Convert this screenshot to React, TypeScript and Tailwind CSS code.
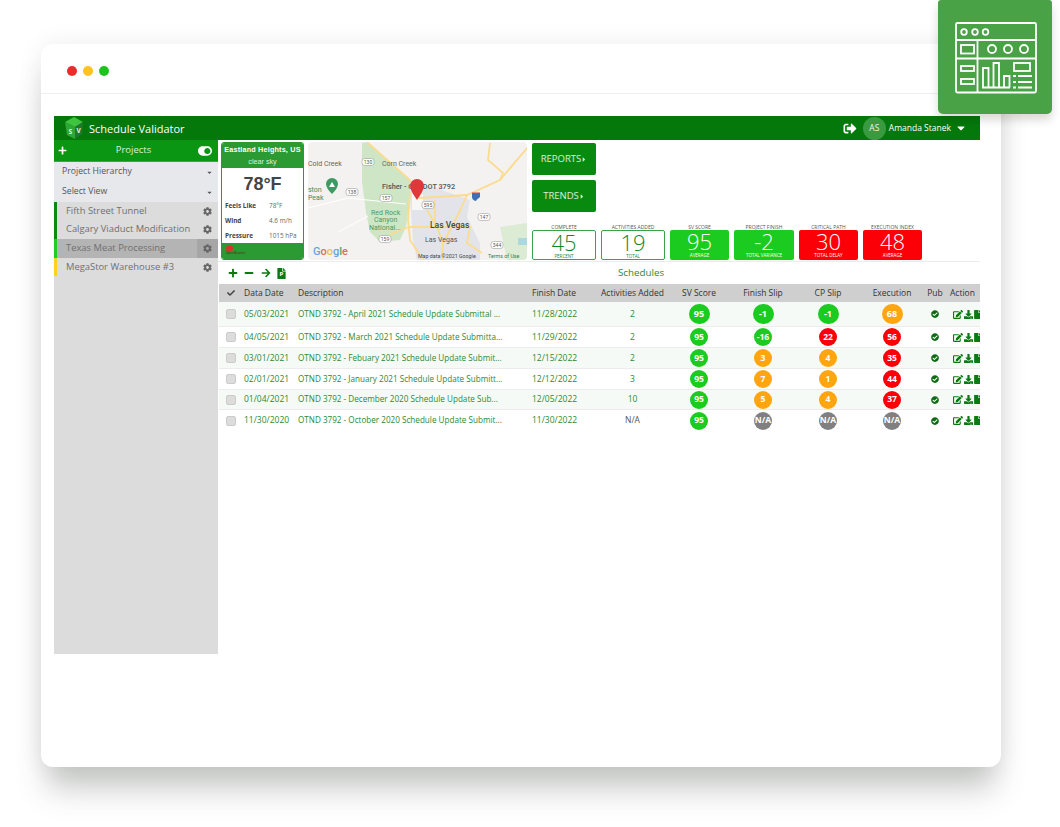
import React from "react";
import {
  FaCog, FaCheckCircle, FaEdit, FaDownload, FaSignOutAlt, FaCheck, FaPlus, FaMinus,
  FaArrowRight, FaCaretDown, FaCaretRight, FaToggleOn, FaFile,
} from "react-icons/fa";

type Tone = "g" | "r" | "o" | "n";
const toneClass: Record<Tone, string> = {
  g: "bg-[#1ccb1f]",
  r: "bg-[#fb0007]",
  o: "bg-[#ffa50f]",
  n: "bg-[#808080]",
};

function Badge({ v, t, big }: { v: string; t: Tone; big?: boolean }) {
  return (
    <span
      className={`inline-flex items-center justify-center rounded-full font-bold text-white ${toneClass[t]} ${
        big ? "w-[21px] h-[20px] text-[9px]" : "w-[18px] h-[18px] text-[8.5px]"
      }`}
    >
      {v}
    </span>
  );
}

const rows: {
  h: string; date: string; desc: string; fin: string; act: string;
  sv: [string, Tone]; fs: [string, Tone]; cp: [string, Tone]; ex: [string, Tone]; bg: string; big?: boolean;
}[] = [
  { h: "h-[25px]", date: "05/03/2021", desc: "OTND 3792 - April 2021 Schedule Update Submittal ...", fin: "11/28/2022", act: "2", sv: ["95", "g"], fs: ["-1", "g"], cp: ["-1", "g"], ex: ["68", "o"], bg: "bg-[#f6faf6]", big: true },
  { h: "h-[21px]", date: "04/05/2021", desc: "OTND 3792 - March 2021 Schedule Update Submitta...", fin: "11/29/2022", act: "2", sv: ["95", "g"], fs: ["-16", "g"], cp: ["22", "r"], ex: ["56", "r"], bg: "bg-white" },
  { h: "h-[21px]", date: "03/01/2021", desc: "OTND 3792 - Febuary 2021 Schedule Update Submit...", fin: "12/15/2022", act: "2", sv: ["95", "g"], fs: ["3", "o"], cp: ["4", "o"], ex: ["35", "r"], bg: "bg-[#f6faf6]" },
  { h: "h-[21px]", date: "02/01/2021", desc: "OTND 3792 - January 2021 Schedule Update Submitt...", fin: "12/12/2022", act: "3", sv: ["95", "g"], fs: ["7", "o"], cp: ["1", "o"], ex: ["44", "r"], bg: "bg-white" },
  { h: "h-[20px]", date: "01/04/2021", desc: "OTND 3792 - December 2020 Schedule Update Sub...", fin: "12/05/2022", act: "10", sv: ["95", "g"], fs: ["5", "o"], cp: ["4", "o"], ex: ["37", "r"], bg: "bg-[#f6faf6]" },
  { h: "h-[21px]", date: "11/30/2020", desc: "OTND 3792 - October 2020 Schedule Update Submit...", fin: "11/30/2022", act: "N/A", sv: ["95", "g"], fs: ["N/A", "n"], cp: ["N/A", "n"], ex: ["N/A", "n"], bg: "bg-white" },
];

const gridCols = "grid grid-cols-[25px_54px_234px_69px_63px_70px_58px_72px_56px_30px_1fr] items-center";

const kpis: { label: string; value: string; sub: string; box: string; w: string }[] = [
  { label: "COMPLETE", value: "45", sub: "PERCENT", box: "bg-white border border-[#3aa34a] text-[#12862a]", w: "w-[64px]" },
  { label: "ACTIVITIES ADDED", value: "19", sub: "TOTAL", box: "bg-white border border-[#3aa34a] text-[#12862a]", w: "w-[64px]" },
  { label: "SV SCORE", value: "95", sub: "AVERAGE", box: "bg-[#1ccb1f] text-white", w: "w-[59px]" },
  { label: "PROJECT FINISH", value: "-2", sub: "TOTAL VARIANCE", box: "bg-[#1ccb1f] text-white", w: "w-[60px]" },
  { label: "CRITICAL PATH", value: "30", sub: "TOTAL DELAY", box: "bg-[#fb0007] text-white", w: "w-[59px]" },
  { label: "EXECUTION INDEX", value: "48", sub: "AVERAGE", box: "bg-[#fb0007] text-white", w: "w-[59px]" },
];

const projects = [
  { name: "Fifth Street Tunnel", stripe: "bg-[#0a8a12]", bg: "bg-[#dcdcdc]", h: "h-[18px]", gearBg: "" },
  { name: "Calgary Viaduct Modification", stripe: "bg-[#0a8a12]", bg: "bg-[#dcdcdc]", h: "h-[19px]", gearBg: "" },
  { name: "Texas Meat Processing", stripe: "bg-[#22cc22]", bg: "bg-[#b4b4b4]", h: "h-[19px]", gearBg: "bg-[#a6a6a6]" },
  { name: "MegaStor Warehouse #3", stripe: "bg-[#ffd21f]", bg: "bg-[#dcdcdc]", h: "h-[18px]", gearBg: "" },
];

function Logo() {
  return (
    <svg width="20" height="22" viewBox="0 0 20 22" className="shrink-0">
      <polygon points="1,5 10,0 19,5 11,10" fill="#3fc43f" />
      <polygon points="1,5 11,10 11,22 3,18" fill="#2ea836" />
      <polygon points="11,10 19,5 18,17 11,22" fill="#1e7a2a" />
      <text x="4.500" y="17" fontSize="6.500" fontWeight="700" fill="#e4f7e4" fontFamily="Open Sans">S</text>
      <text x="12.500" y="16" fontSize="6.500" fontWeight="700" fill="#e4f7e4" fontFamily="Open Sans">V</text>
    </svg>
  );
}

function BadgeIcon() {
  return (
    <svg width="114" height="114" viewBox="938 0 114 114" fill="none" stroke="#fff" strokeWidth="1.8">
      <rect x="956" y="23" width="80" height="69.5" rx="1.500" />
      <path d="M956 40H1036M956 58.500H1036M977.500 40V92.500" />
      <circle cx="964" cy="32" r="2.800" />
      <circle cx="975" cy="32" r="2.800" />
      <circle cx="985.500" cy="32" r="2.800" />
      <rect x="961" y="45" width="13" height="8.500" />
      <circle cx="992" cy="49" r="4" />
      <circle cx="1008" cy="49" r="4" />
      <circle cx="1024" cy="49" r="4" />
      <rect x="961" y="66" width="13" height="5" />
      <rect x="961" y="79" width="13" height="5" />
      <path d="M982 87.500H1010M983 87.500V68H988.500V87.500M993.500 87.500V63H999V87.500M1004 87.500V76H1009.500V87.500" />
      <rect x="1014" y="63" width="16" height="8" />
      <path d="M1013 76H1016M1018 76H1032M1013 82H1016M1018 82H1032M1013 87.500H1016M1018 87.500H1032" />
    </svg>
  );
}

function MapArt() {
  const label = { fontFamily: "Roboto, sans-serif" };
  const shields: [number, number, string][] = [[60, 20, "130"], [44, 50, "138"], [78, 56, "157"], [120, 63, "595"], [176, 75, "147"], [77, 97, "159"], [189, 103, "344"]];
  return (
    <svg width="219" height="118" viewBox="0 0 219 118" className="rounded-sm block">
      <rect width="219" height="118" fill="#f3f2f0" />
      <polygon points="54,1 60,0 102,38 102,55 98,85 92,98 72,100 62,90 58,70 54,40" fill="#cfe6c6" />
      <polygon points="192,85 219,81 219,118 199,118" fill="#dcebd4" />
      <polygon points="102,41 125,45 162,58 159,75 172,101 172,118 109,118 105,98 102,55" fill="#e2e4ea" />
      <polygon points="104,52 115,52 115,68 104,68" fill="#f6f6f6" />
      <rect x="210" y="96" width="9" height="7" fill="#aadae0" />
      <g fill="none" stroke="#fbdc8e" strokeWidth="1.800">
        <path d="M60 1 L102 38 L107 51 L112 56 L159 53 L192 38 L219 6" />
        <path d="M182 1 L180 18 L195 31 L192 38" />
        <path d="M159 53 L149 75 L135 101 L134 118" />
        <path d="M102 50 L100 78 L102 98 L115 118" />
        <path d="M102 85 H162 L159 101 L174 111" />
        <path d="M72 98 L92 88 L102 85" />
        <path d="M119 68 L129 85 L135 101" />
        <path d="M127 58 V85" />
      </g>
      <path d="M0 66 L40 56 L98 62 M30 90 L60 74" stroke="#fff" strokeWidth="1" fill="none" />
      {shields.map(([x, y, t]) => (
        <g key={t}>
          <rect x={x - 6} y={y - 3.5} width="12" height="7" rx="2.500" fill="#fff" stroke="#8a8a8a" strokeWidth="0.500" />
          <text x={x} y={y + 1.8} fontSize="5" textAnchor="middle" fill="#555" style={label}>{t}</text>
        </g>
      ))}
      <path d="M164 51 h8 v4 q-4 3-4 4 q-4 -1 -4 -4z" fill="#3f6fb5" />
      <rect x="164" y="50.500" width="8" height="1.500" fill="#d9423b" />
      <text x="0" y="24" fontSize="7" fill="#666" style={label}>Cold Creek</text>
      <text x="74" y="24" fontSize="7" fill="#666" style={label}>Corn Creek</text>
      <text x="0" y="50" fontSize="7" fill="#3d8f5a" style={label}>ston</text>
      <text x="0" y="58" fontSize="7" fill="#3d8f5a" style={label}>Peak</text>
      <path d="M18 42 a6 6 0 1 1 12 0 q0 4 -6 10 q-6 -6 -6 -10z" fill="#3d9a63" />
      <path d="M21 45 L24 40 L27 45z" fill="#fff" />
      <text x="74" y="47" fontSize="7.300" fontWeight="500" fill="#555" style={label}>Fisher - OTNDOT 3792</text>
      <text x="63" y="73" fontSize="7" fill="#4c9a62" style={label}>Red Rock</text>
      <text x="66" y="80" fontSize="7" fill="#4c9a62" style={label}>Canyon</text>
      <text x="61" y="88" fontSize="7" fill="#4c9a62" style={label}>National...</text>
      <text x="122" y="86" fontSize="8.500" fontWeight="500" fill="#444" style={label}>Las Vegas</text>
      <text x="117" y="100" fontSize="7" fill="#555" style={label}>Las Vegas</text>
      <path d="M102 44 a7 7 0 1 1 14 0 q0 4 -7 14 q-7 -10 -7 -14z" fill="#e0373a" />
      <text x="5" y="113" fontSize="11" fontWeight="500" style={label}>
        <tspan fill="#6a9fe0">G</tspan><tspan fill="#e36a5c">o</tspan><tspan fill="#f0c040">o</tspan><tspan fill="#6a9fe0">g</tspan><tspan fill="#4aa86a">l</tspan><tspan fill="#e36a5c">e</tspan>
      </text>
      <text x="110" y="115.500" fontSize="5.300" fill="#444" style={label}>Map data ©2021 Google</text>
      <text x="180" y="115.500" fontSize="5.300" fill="#2f7d52" style={label}>Terms of Use</text>
    </svg>
  );
}

function ProjectFile({ className }: { className?: string }) {
  return (
    <span className={`relative inline-flex ${className ?? ""}`}>
      <FaFile className="text-[#0b7a12] w-[9px] h-[11px]" />
      <span className="absolute inset-0 flex items-center justify-center text-[6px] font-bold text-white pt-[2px]">P</span>
    </span>
  );
}

export default function App() {
  return (
    <div className="relative w-[1060px] h-[827px] overflow-hidden bg-white font-['Open_Sans',sans-serif]">
      <div className="absolute left-[938px] top-0 w-[114px] h-[114px] bg-[#4aa247] rounded-b-[5px] rounded-t-[3px] shadow-[0_6px_10px_rgba(0,0,0,0.15)] z-10">
        <BadgeIcon />
      </div>

      <div className="pt-[44px] pl-[41px]">
        <div className="w-[960px] h-[723px] bg-white rounded-[12px] shadow-[0_28px_30px_-6px_rgba(60,70,60,0.28),0_0_26px_rgba(0,0,0,0.07)]">
          <div className="h-[50px] border-b border-[#eeeeee] flex items-center gap-[6px] pl-[26px] pt-[5px]">
            <span className="w-[10px] h-[10px] rounded-full bg-[#ee2b2b]" />
            <span className="w-[10px] h-[10px] rounded-full bg-[#ffc21f]" />
            <span className="w-[10px] h-[10px] rounded-full bg-[#1cc41c]" />
          </div>

          <div className="mt-[22px] ml-[13px] w-[926px] h-[538px] flex flex-col overflow-hidden">
            <div className="h-[24px] bg-[#05780b] flex items-center text-white shrink-0">
              <div className="ml-[10px] flex"><Logo /></div>
              <span className="ml-[5px] text-[11px] leading-none">Schedule Validator</span>
              <FaSignOutAlt className="ml-auto w-[14px] h-[13px]" />
              <span className="ml-[6px] w-[23px] h-[23px] rounded-full bg-[#3a9a3f] flex items-center justify-center text-[8.5px] text-white/90">AS</span>
              <span className="ml-[3px] text-[8.5px]">Amanda Stanek</span>
              <FaCaretDown className="ml-[4px] mr-[13px] w-[12px] h-[12px]" />
            </div>

            <div className="flex flex-1 min-h-0">
              <aside className="w-[164px] shrink-0 bg-[#dcdcdc] flex flex-col">
                <div className="h-[22px] bg-[#0a9612] border-b border-[#2bb32f] flex items-center text-white relative">
                  <FaPlus className="ml-[4px] w-[9px] h-[9px]" />
                  <span className="flex-1 text-center text-[9.5px] text-[#d9f2da] pl-[2px]">Projects</span>
                  <FaToggleOn className="mr-[6px] w-[14px] h-[14px]" />
                </div>
                <div className="h-[20px] bg-[#e7e8ec] flex items-center pl-[8px] pr-[5px] text-[8.7px] text-[#555]">
                  <span className="flex-1">Project Hierarchy</span>
                  <FaCaretDown className="w-[7px] h-[7px] text-[#555]" />
                </div>
                <div className="h-[20px] bg-[#e7e8ec] flex items-center pl-[8px] pr-[5px] text-[8.7px] text-[#555]">
                  <span className="flex-1">Select View</span>
                  <FaCaretDown className="w-[7px] h-[7px] text-[#555]" />
                </div>
                {projects.map((p) => (
                  <div key={p.name} className={`flex items-stretch ${p.h} ${p.bg}`}>
                    <span className={`w-[3px] shrink-0 ${p.stripe}`} />
                    <span className="flex-1 pl-[9px] flex items-center text-[9.4px] text-[#707070] whitespace-nowrap">{p.name}</span>
                    <span className={`w-[21px] flex items-center justify-center ${p.gearBg}`}>
                      <FaCog className="w-[9px] h-[9px] text-[#666]" />
                    </span>
                  </div>
                ))}
              </aside>

              <main className="flex-1 min-w-0 flex flex-col">
                <div className="h-[122px] border-b border-[#ececec] flex shrink-0 pl-[3px] pt-[2px]">
                  <div className="w-[83px] h-[118px] rounded-[3px] border border-[#2b9a33] flex flex-col overflow-hidden shrink-0">
                    <div className="h-[25px] bg-[#2b9a33] text-white text-center font-bold text-[7.2px] leading-[9px] pt-[2px] font-['Liberation_Sans',sans-serif] whitespace-nowrap">
                      <div className="tracking-[0.2px]">Eastland Heights, US</div>
                      <div className="font-normal mt-[3px] text-[#d9f2da]">clear sky</div>
                    </div>
                    <div className="flex-1 px-[3px]">
                      <div className="text-center text-[18px] font-bold text-[#444] leading-[18px] mt-[7px] font-['Liberation_Sans',sans-serif]">78°F</div>
                      {[["Feels Like", "78°F"], ["Wind", "4.6 m/h"], ["Pressure", "1015 hPa"]].map(([k, v], i) => (
                        <div key={k} className={`flex text-[6.4px] text-[#444] ${i === 0 ? "mt-[9px]" : "mt-[7px]"} leading-[8px] whitespace-nowrap`}>
                          <span className="w-[44px] font-bold">{k}</span>
                          <span className="text-[#666]">{v}</span>
                        </div>
                      ))}
                    </div>
                    <div className="h-[16px] bg-[#2b9a33] pl-[4px] pt-[2px]">
                      <span className="block w-[7px] h-[7px] rounded-full bg-[#d9342b]" />
                      <span className="block text-[3px] leading-[3px] text-[#5a1a14] whitespace-nowrap">OpenWeather</span>
                    </div>
                  </div>
                  <div className="ml-[4px] shrink-0"><MapArt /></div>
                  <div className="ml-[5px] flex flex-col pt-[1px]">
                    <button className="w-[64px] h-[32px] rounded-[2px] bg-[#088a0f] text-white/85 text-[9.5px] flex items-center justify-center">
                      REPORTS<FaCaretRight className="w-[6px] h-[7px]" />
                    </button>
                    <button className="mt-[5px] w-[64px] h-[32px] rounded-[2px] bg-[#088a0f] text-white/85 text-[9.5px] flex items-center justify-center">
                      TRENDS<FaCaretRight className="w-[6px] h-[7px]" />
                    </button>
                    <div className="mt-[12px] flex">
                      {kpis.map((k) => (
                        <div key={k.label} className={`${k.w} mr-[5px] flex flex-col items-center shrink-0`}>
                          <div className="h-[6px] text-[5px] leading-[6px] text-[#555] whitespace-nowrap">{k.label}</div>
                          <div className={`w-full h-[30px] rounded-[2px] flex flex-col items-center ${k.box}`}>
                            <span className="text-[22px] font-light leading-[22px] h-[22px] whitespace-nowrap">{k.value}</span>
                            <span className="text-[4.5px] leading-[6px] whitespace-nowrap">{k.sub}</span>
                          </div>
                        </div>
                      ))}
                    </div>
                  </div>
                </div>

                <div className="h-[22px] flex items-center shrink-0 pl-[10px] text-[#0b7a12]">
                  <FaPlus className="w-[10px] h-[10px]" />
                  <FaMinus className="ml-[6px] w-[10px] h-[10px]" />
                  <FaArrowRight className="ml-[7px] w-[10px] h-[10px]" />
                  <ProjectFile className="ml-[6px]" />
                  <span className="ml-[332px] text-[9.8px] text-[#2a8a35]">Schedules</span>
                </div>

                <div className={`${gridCols} h-[18px] bg-[#cfcfcf] text-[8.5px] text-[#333] ml-[1px]`}>
                  <span className="flex justify-center pr-[2px]"><FaCheck className="w-[8px] h-[8px] text-[#444]" /></span>
                  <span>Data Date</span>
                  <span>Description</span>
                  <span>Finish Date</span>
                  <span className="text-center whitespace-nowrap">Activities Added</span>
                  <span className="text-center">SV Score</span>
                  <span className="text-center">Finish Slip</span>
                  <span className="text-center">CP Slip</span>
                  <span className="text-center">Execution</span>
                  <span className="text-center">Pub</span>
                  <span className="whitespace-nowrap">Action</span>
                </div>

                {rows.map((r) => (
                  <div key={r.date} className={`${gridCols} ${r.h} ${r.bg} border-b border-[#ececec] last:border-b-0 text-[8.5px] text-[#2a8a35] ml-[1px]`}>
                    <span className="flex justify-center pr-[2px]"><span className="w-[10px] h-[10px] rounded-[2px] bg-[#dcdcdc] border border-[#cccccc]" /></span>
                    <span>{r.date}</span>
                    <span className="text-[8.15px] whitespace-nowrap overflow-hidden">{r.desc}</span>
                    <span>{r.fin}</span>
                    <span className={`text-center ${r.act === "N/A" ? "text-[#555]" : ""}`}>{r.act}</span>
                    <span className="flex justify-center"><Badge v={r.sv[0]} t={r.sv[1]} big={r.big} /></span>
                    <span className="flex justify-center"><Badge v={r.fs[0]} t={r.fs[1]} big={r.big} /></span>
                    <span className="flex justify-center"><Badge v={r.cp[0]} t={r.cp[1]} big={r.big} /></span>
                    <span className="flex justify-center"><Badge v={r.ex[0]} t={r.ex[1]} big={r.big} /></span>
                    <span className="flex justify-center"><FaCheckCircle className="w-[8px] h-[8px] text-[#0b6a12]" /></span>
                    <span className="flex items-center gap-[1px] pl-[3px] text-[#0b7a12]">
                      <FaEdit className="w-[10px] h-[9px] shrink-0" />
                      <FaDownload className="w-[9px] h-[9px] shrink-0" />
                      <FaFile className="w-[7px] h-[9px] shrink-0" />
                    </span>
                  </div>
                ))}
              </main>
            </div>
          </div>
        </div>
      </div>
    </div>
  );
}
